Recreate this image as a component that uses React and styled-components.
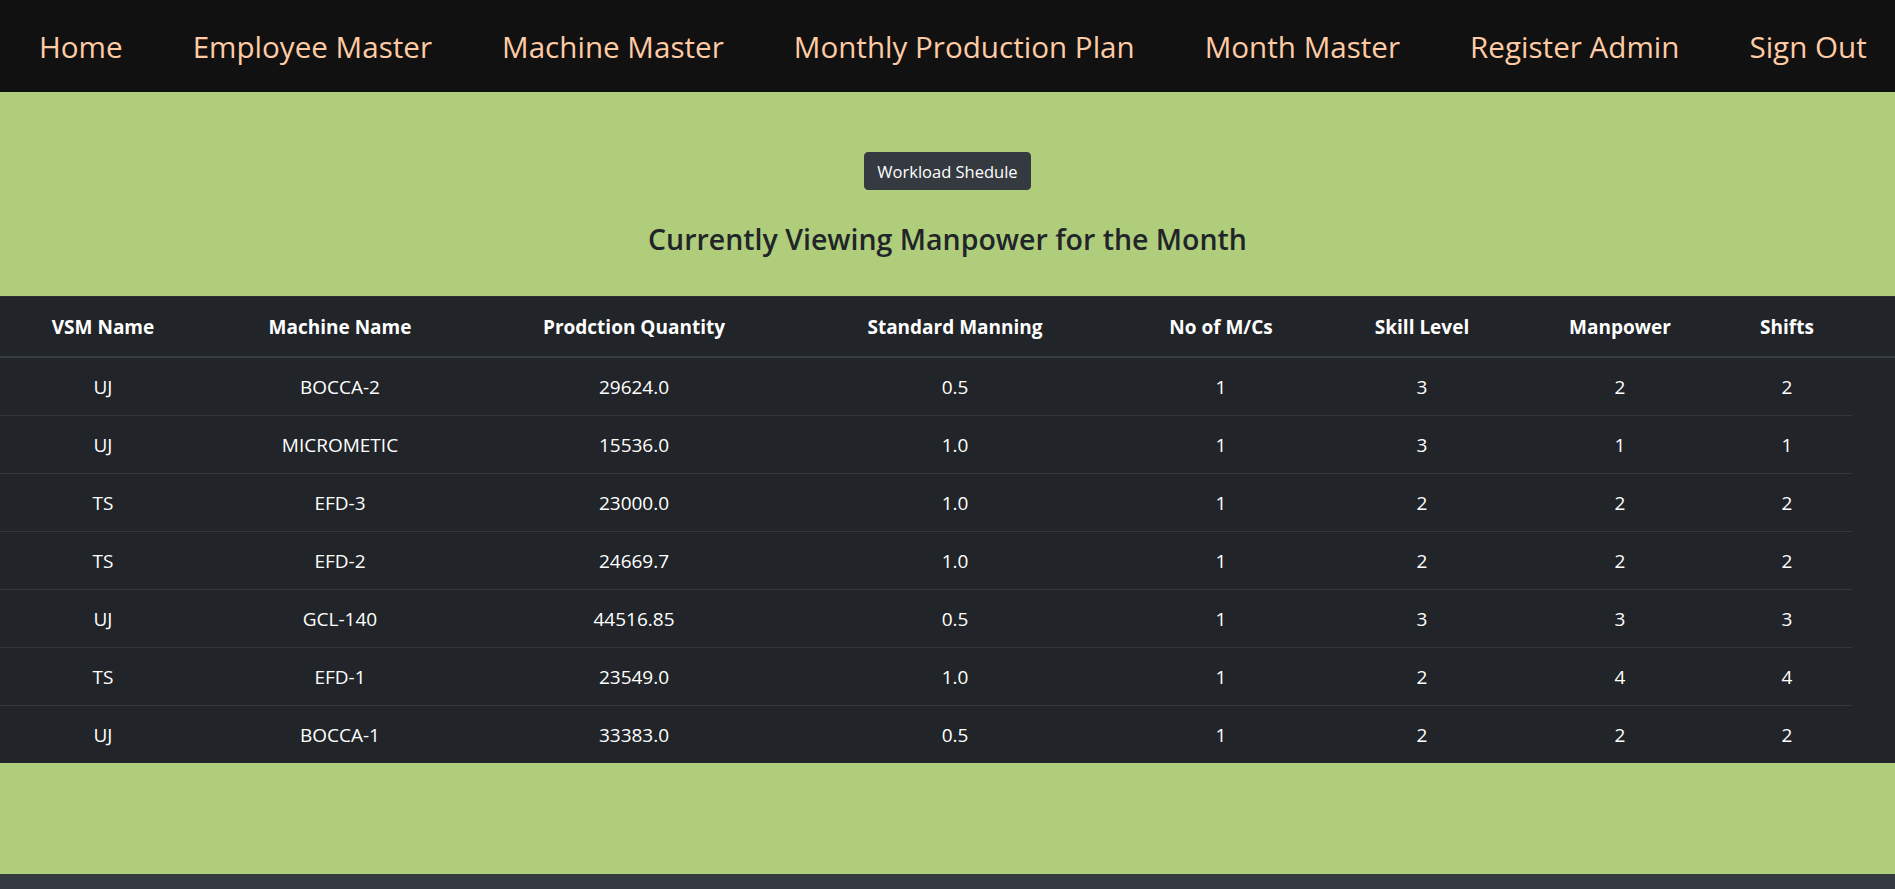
import React from "react";
import styled, { createGlobalStyle } from "styled-components";

const GlobalStyle = createGlobalStyle`
  body {
    margin: 0;
    font-family: "Open Sans", "Liberation Sans", sans-serif;
    background: #343a40;
  }
`;

const Page = styled.div`
  display: flex;
  flex-direction: column;
  min-height: 889px;
`;

const NavBar = styled.nav`
  height: 92px;
  background: #111111;
  display: flex;
  align-items: center;
  gap: 70px;
  padding-left: 39px;
`;

const NavItem = styled.a`
  color: #ffcba4;
  font-size: 29.6px;
  text-decoration: none;
  cursor: pointer;
  white-space: nowrap;
`;

const Main = styled.main`
  background: #b0cd7c;
  padding-bottom: 111px;
`;

const Hero = styled.div`
  height: 204px;
  display: flex;
  flex-direction: column;
  align-items: center;
  padding-top: 60px;
  box-sizing: border-box;
`;

const Button = styled.button`
  height: 38px;
  padding: 0 12px;
  background: #343a40;
  color: #ffffff;
  border: 1px solid #343a40;
  border-radius: 4px;
  font-family: inherit;
  font-size: 16.5px;
  cursor: pointer;
`;

const Heading = styled.h3`
  margin: 30px 0 0;
  font-size: 28.5px;
  font-weight: 600;
  color: #212529;
`;

const TableWrap = styled.div`
  background: #212529;
  border-top: 1px solid #2c3034;
`;

const Table = styled.table`
  width: 100%;
  border-collapse: collapse;
  table-layout: fixed;
  color: #ffffff;
  font-size: 19px;
`;

const Th = styled.th`
  height: 59px;
  font-size: 19px;
  font-weight: 700;
  text-align: center;
  border-bottom: 2px solid #383d42;
  padding: 0;
`;

const Td = styled.td`
  height: 57px;
  text-align: center;
  padding: 0;
  border-bottom: ${(p) => (p.$filler || p.$last ? "none" : "1px solid #32383e")};
`;

const Footer = styled.footer`
  flex: 1;
  background: #343a40;
`;

const navLinks = [
  "Home",
  "Employee Master",
  "Machine Master",
  "Monthly Production Plan",
  "Month Master",
  "Register Admin",
  "Sign Out",
];

const columns = [
  { title: "VSM Name", width: 206 },
  { title: "Machine Name", width: 268 },
  { title: "Prodction Quantity", width: 320 },
  { title: "Standard Manning", width: 322 },
  { title: "No of M/Cs", width: 210 },
  { title: "Skill Level", width: 192 },
  { title: "Manpower", width: 204 },
  { title: "Shifts", width: 130 },
];

const rows = [
  ["UJ", "BOCCA-2", "29624.0", "0.5", "1", "3", "2", "2"],
  ["UJ", "MICROMETIC", "15536.0", "1.0", "1", "3", "1", "1"],
  ["TS", "EFD-3", "23000.0", "1.0", "1", "2", "2", "2"],
  ["TS", "EFD-2", "24669.7", "1.0", "1", "2", "2", "2"],
  ["UJ", "GCL-140", "44516.85", "0.5", "1", "3", "3", "3"],
  ["TS", "EFD-1", "23549.0", "1.0", "1", "2", "4", "4"],
  ["UJ", "BOCCA-1", "33383.0", "0.5", "1", "2", "2", "2"],
];

export default function App() {
  return (
    <>
      <GlobalStyle />
      <Page>
        <NavBar>
          {navLinks.map((l) => (
            <NavItem key={l}>{l}</NavItem>
          ))}
        </NavBar>
        <Main>
          <Hero>
            <Button>Workload Shedule</Button>
            <Heading>Currently Viewing Manpower for the Month</Heading>
          </Hero>
          <TableWrap>
            <Table>
              <colgroup>
                {columns.map((c) => (
                  <col key={c.title} style={{ width: c.width }} />
                ))}
                <col />
              </colgroup>
              <thead>
                <tr>
                  {columns.map((c) => (
                    <Th key={c.title}>{c.title}</Th>
                  ))}
                  <Th />
                </tr>
              </thead>
              <tbody>
                {rows.map((r, i) => (
                  <tr key={i}>
                    {r.map((v, j) => (
                      <Td key={j} $last={i === rows.length - 1}>
                        {v}
                      </Td>
                    ))}
                    <Td $filler />
                  </tr>
                ))}
              </tbody>
            </Table>
          </TableWrap>
        </Main>
        <Footer />
      </Page>
    </>
  );
}
